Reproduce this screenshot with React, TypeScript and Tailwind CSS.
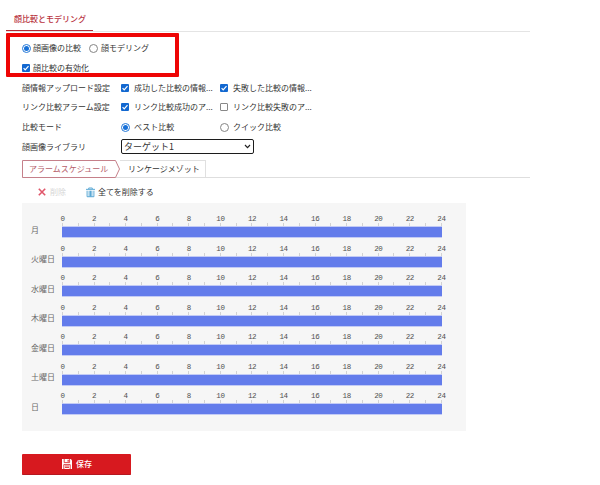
import React from "react";

const days = ["月", "火曜日", "水曜日", "木曜日", "金曜日", "土曜日", "日"];
const hours = Array.from({ length: 25 }, (_, i) => i);

function Radio({ on }: { on?: boolean }) {
  return (
    <span
      className={`flex size-[9px] shrink-0 items-center justify-center rounded-full border bg-white ${
        on ? "border-[#2478d8]" : "border-[#858585]"
      }`}
    >
      {on && <span className="size-[5px] rounded-full bg-[#1670d8]" />}
    </span>
  );
}

function Check({ on }: { on?: boolean }) {
  return on ? (
    <span className="flex size-[8px] shrink-0 items-center justify-center rounded-[1px] bg-[#1268d0]">
      <svg viewBox="0 0 8 8" className="size-[8px]" fill="none" stroke="white" strokeWidth="1.2">
        <path d="M1.6 4.2 3.2 5.8 6.5 2.2" />
      </svg>
    </span>
  ) : (
    <span className="size-[8px] shrink-0 rounded-[1px] border border-[#888] bg-white" />
  );
}

function Option({ kind, on, label }: { kind: "radio" | "check"; on?: boolean; label: string }) {
  return (
    <div className="flex items-center">
      <div className="flex w-[13px] shrink-0">{kind === "radio" ? <Radio on={on} /> : <Check on={on} />}</div>
      <span>{label}</span>
    </div>
  );
}

function Row({ label, children }: { label: string; children: React.ReactNode }) {
  return (
    <div className="flex h-[19.7px] items-center">
      <div className="w-[99px] shrink-0">{label}</div>
      {children}
    </div>
  );
}

function DayRow({ day }: { day: string }) {
  return (
    <div className="flex h-[29.5px]">
      <div className="w-[31px] shrink-0 pt-[9.5px] text-[#6a6a6a]">{day}</div>
      <div className="w-[380px]">
        <div className="flex h-[9px] justify-between pt-px font-['Liberation_Mono',monospace] text-[7.5px] leading-[9px] tracking-[-0.4px] text-[#505050]">
          {hours
            .filter((h) => h % 2 === 0)
            .map((h) => (
              <span key={h} className="flex w-px justify-center">
                {h}
              </span>
            ))}
        </div>
        <div className="flex h-[3px] justify-between">
          {hours.map((h) => (
            <span key={h} className="h-[3px] w-px bg-[#d2d2d2]" />
          ))}
        </div>
        <div className="h-[12px] border-y border-[#c3cbf5] bg-[#637ceb]" />
      </div>
    </div>
  );
}

export default function App() {
  return (
    <div className="relative h-[485px] w-[600px] overflow-hidden bg-white font-['Noto_Sans_CJK_JP',sans-serif] text-[8px] leading-[12px] whitespace-nowrap text-[#333]">
      <div className="ml-[6px] flex h-[32px] w-[524px] items-end border-b border-[#e4e4e4]">
        <div className="flex h-[18px] w-[87px] border-b border-[#b52a35] pl-[8px] font-medium text-[#b8323e]">
          顔比較とモデリング
        </div>
      </div>

      <div className="pointer-events-none absolute top-[33px] left-[6px] h-[44px] w-[173px] rounded-[1px] border-4 border-[#ee0505]" />

      <div className="pt-[6.5px] pl-[22px]">
        <div className="flex h-[19.7px] items-center">
          <div className="w-[67px]">
            <div className="flex items-center">
              <span className="flex w-[11px]">
                <Radio on />
              </span>
              顔画像の比較
            </div>
          </div>
          <div className="flex items-center">
            <span className="flex w-[12px]">
              <Radio />
            </span>
            顔モデリング
          </div>
        </div>
        <div className="flex h-[19.7px] items-center">
          <span className="flex w-[11px]">
            <Check on />
          </span>
          顔比較の有効化
        </div>
        <Row label="顔情報アップロード設定">
          <div className="w-[99px]">
            <Option kind="check" on label="成功した比較の情報..." />
          </div>
          <Option kind="check" on label="失敗した比較の情報..." />
        </Row>
        <Row label="リンク比較アラーム設定">
          <div className="w-[99px]">
            <Option kind="check" on label="リンク比較成功のア..." />
          </div>
          <Option kind="check" label="リンク比較失敗のア..." />
        </Row>
        <Row label="比較モード">
          <div className="w-[99px]">
            <Option kind="radio" on label="ベスト比較" />
          </div>
          <Option kind="radio" label="クイック比較" />
        </Row>
        <Row label="顔画像ライブラリ">
          <div className="flex h-[15px] w-[133px] items-center justify-between rounded-[2px] border-[1.5px] border-[#1c1c1c] pr-[2px] pl-[2px] text-[9px]">
            <span>ターゲット1</span>
            <svg viewBox="0 0 8 6" className="h-[5px] w-[7px]" fill="none" stroke="#222" strokeWidth="1.4">
              <path d="M1 1.2 4 4.4 7 1.2" />
            </svg>
          </div>
        </Row>
      </div>

      <div className="mt-[3.5px] ml-[22px] flex h-[18px] w-[508px] border-b border-[#dedede]">
        <div className="relative h-[18px] w-[98px]">
          <svg viewBox="0 0 98 18" className="absolute inset-0 h-[18px] w-[98px]" fill="white" stroke="#c5808a">
            <path d="M.5 .5H93.5L97.5 9 93.5 17.5H.5Z" />
          </svg>
          <span className="relative block pt-[3px] pl-[7px] text-[#b6606b]">アラームスケジュール</span>
        </div>
        <div className="w-[86px] border-t border-r border-[#e0e0e0] pt-[2px] pl-[8px]">リンケージメゾット</div>
      </div>

      <div className="ml-[22px] flex h-[25px] items-center pt-[3px] pl-[16px]">
        <svg viewBox="0 0 8 8" className="size-[8px]" fill="none" stroke="#e0566a" strokeWidth="1.6">
          <path d="M.8.8 7.2 7.2M7.2.8.8 7.2" />
        </svg>
        <span className="w-[40px] pl-[4px] text-[#d6d6d6]">削除</span>
        <svg viewBox="0 0 10 11" className="h-[11px] w-[9px]" fill="none" stroke="#4a9fd0" strokeWidth="1">
          <path d="M0 2H10M3 1.5V.5H7V1.5M1.2 3.5V10.2H8.8V3.5M3.5 3.5V10M5 3.5V10M6.5 3.5V10" />
        </svg>
        <span className="pl-[3px]">全てを削除する</span>
      </div>

      <div className="ml-[22px] h-[228px] w-[444px] bg-[#f6f6f6] pt-[11px] pl-[9px]">
        {days.map((d) => (
          <DayRow key={d} day={d} />
        ))}
      </div>

      <button className="mt-[23px] ml-[22px] flex h-[21px] w-[109px] items-center rounded-[1px] border-b border-[#b51820] bg-[#d7191f] pl-[40px] text-white">
        <svg viewBox="0 0 10 10" className="size-[10px]">
          <path d="M0 0H8.8L10 1.2V10H0Z" fill="white" />
          <path d="M2.2 0V3.6H7.6V0M1.8 10V5.6H8.2V10M3 7H7M3 8.5H7" fill="none" stroke="#d7191f" strokeWidth=".8" />
          <path d="M5.6.8H6.7V2.8H5.6Z" fill="#d7191f" />
        </svg>
        <span className="pl-[4px] font-medium">保存</span>
      </button>
    </div>
  );
}
